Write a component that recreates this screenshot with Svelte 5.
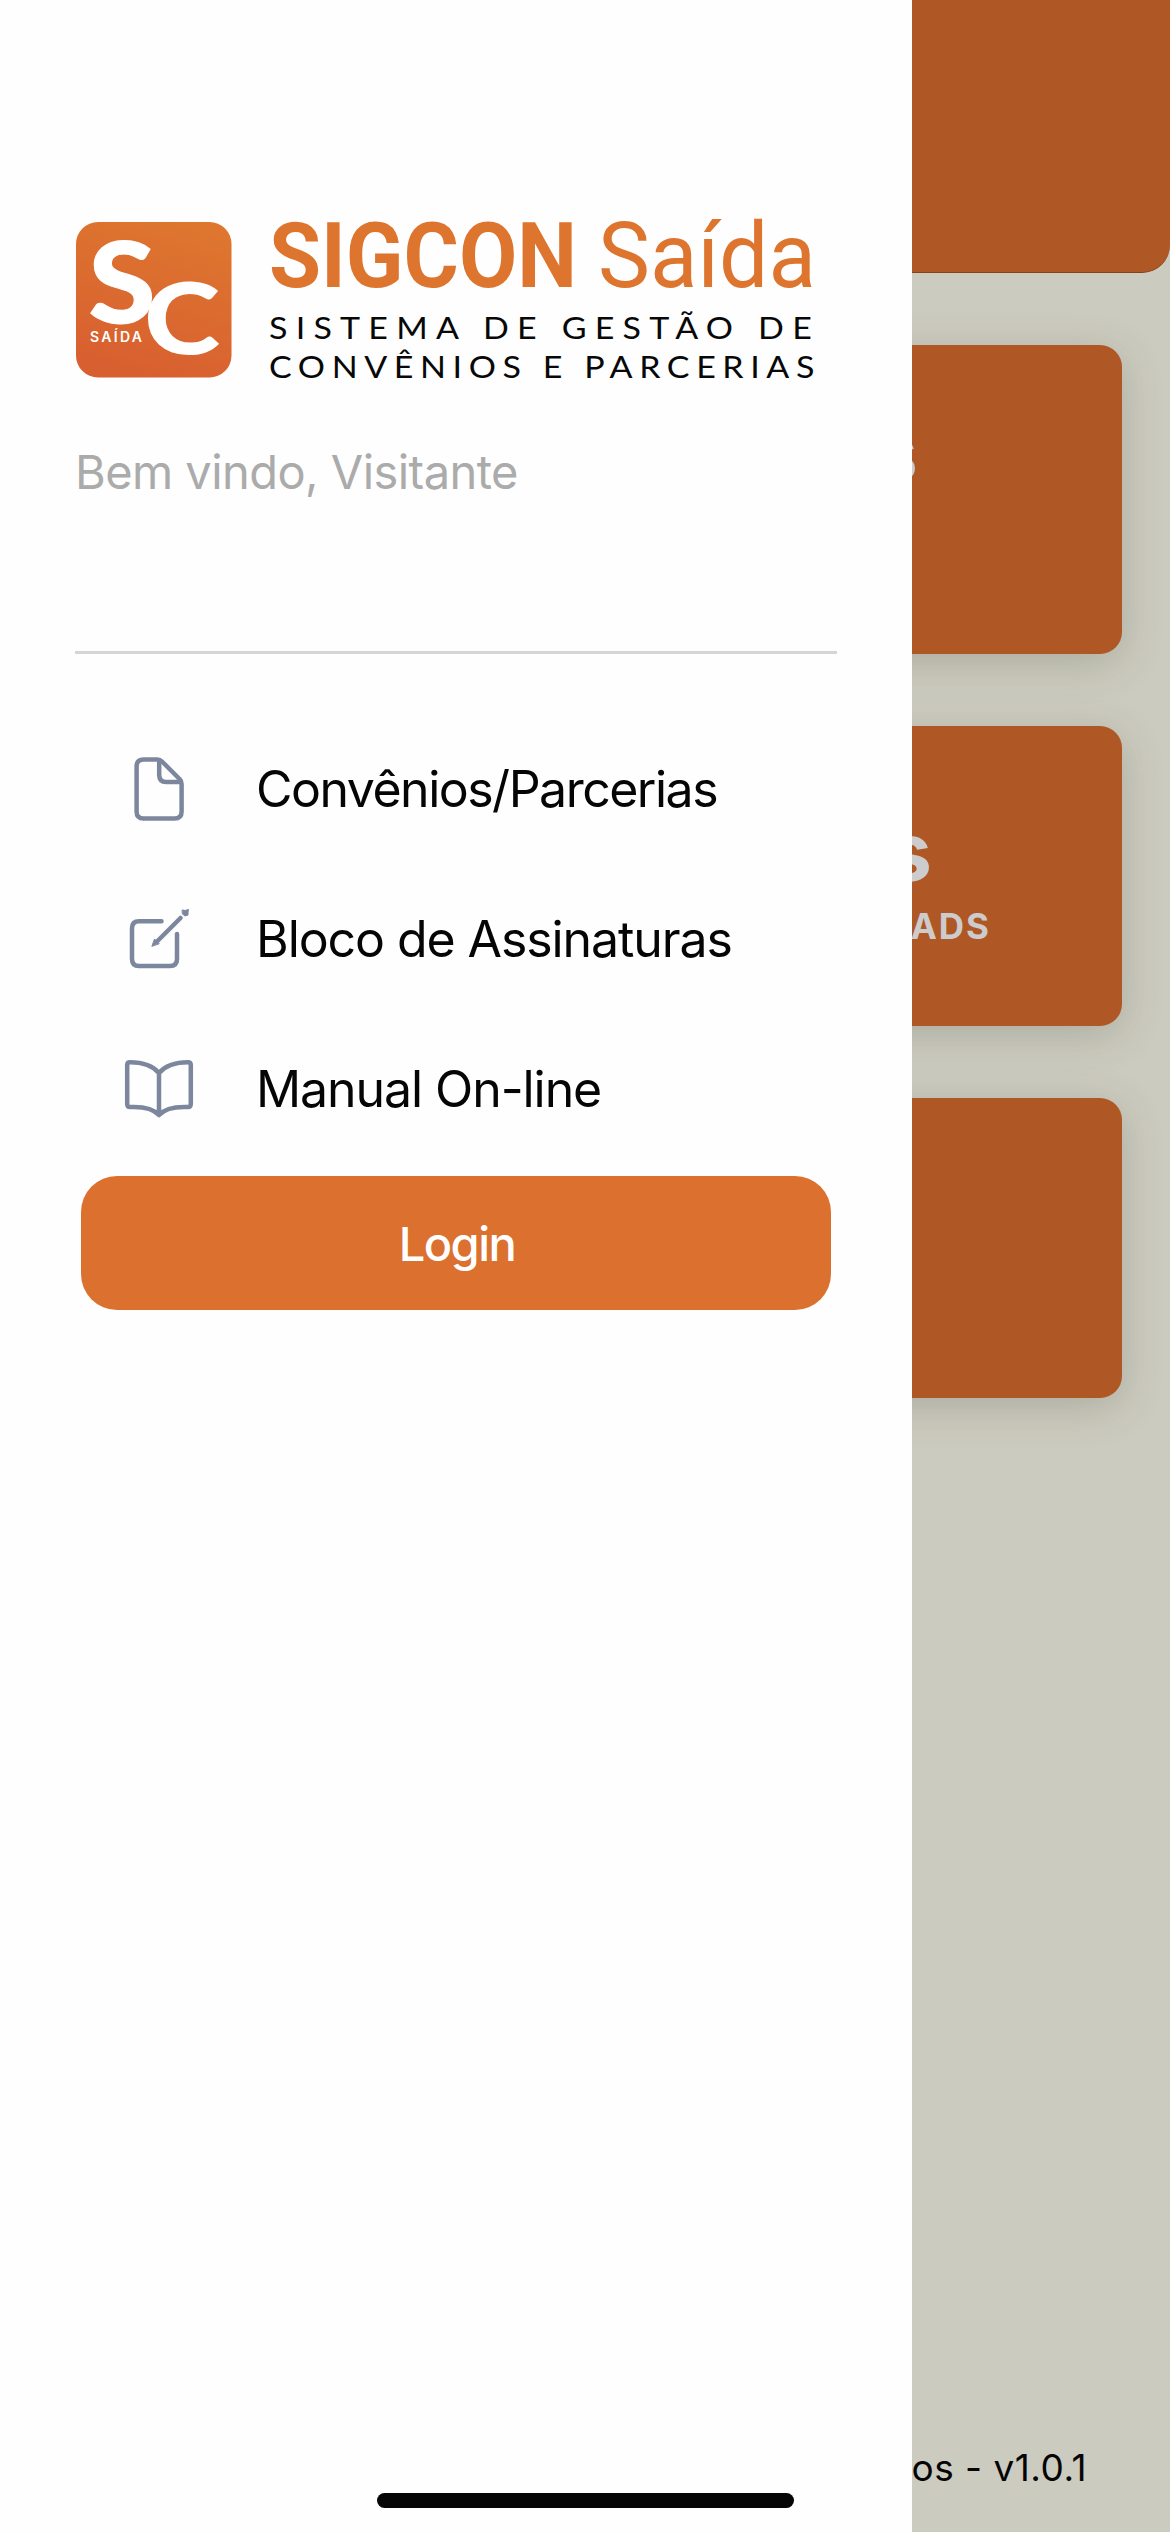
<script>
  const items = [
    { label: 'Convênios/Parcerias', icon: 'file', cls: 'tight' },
    { label: 'Bloco de Assinaturas', icon: 'edit', cls: 'normal' },
    { label: 'Manual On-line', icon: 'book', cls: 'normal' }
  ];
</script>

<div class="screen">
  <div class="page">
    <header></header>
    <main>
      <section class="card tall"><span class="value">s</span></section>
      <section class="card"><span class="value">s</span><span class="caption">ADS</span></section>
      <section class="card"></section>
    </main>
    <footer>os - v1.0.1</footer>
  </div>

  <aside>
    <svg class="logo" viewBox="0 -30 762 210" width="762" height="210" role="img" aria-label="SIGCON Saída">
      <defs>
        <linearGradient id="tile" x1="0.65" y1="0" x2="0.35" y2="1">
          <stop offset="0" stop-color="#de762f" />
          <stop offset="1" stop-color="#d85f30" />
        </linearGradient>
      </defs>
      <rect x="1" y="12" width="155.500" height="155.500" rx="22" fill="url(#tile)" />
      <text x="13.500" y="113" class="mono" textLength="67" lengthAdjust="spacingAndGlyphs">S</text>
      <text x="69" y="144" class="mono small" textLength="76" lengthAdjust="spacingAndGlyphs">C</text>
      <text x="15" y="131.500" class="mini" textLength="52">SAÍDA</text>
      <text x="194" y="77" class="brand bold" textLength="308" lengthAdjust="spacingAndGlyphs">SIGCON</text>
      <text x="523" y="77" class="brand" textLength="218" lengthAdjust="spacingAndGlyphs">Saída</text>
      <text x="194" y="128.500" class="sub first" textLength="551" lengthAdjust="spacingAndGlyphs">SISTEMA DE GESTÃO DE</text>
      <text x="194" y="167.700" class="sub" textLength="552" lengthAdjust="spacingAndGlyphs">CONVÊNIOS E PARCERIAS</text>
    </svg>

    <p class="greeting">Bem vindo, Visitante</p>
    <hr />

    <nav>
      {#each items as item}
        <div class="item">
          <svg class="icon" viewBox="0 0 72 72" width="72" height="72">
            {#if item.icon === 'file'}
              <path d="M21.500 6.500H35.500Q38 6.500 40 8.500L57.500 26Q59.600 28 59.600 31V58.500Q59.600 65.500 52.600 65.500H21.500Q14.600 65.500 14.600 58.500V13.500Q14.600 6.500 21.500 6.500Z" />
              <path d="M37.200 7.500V22Q37.200 29 44.200 29H58.500" />
            {:else if item.icon === 'edit'}
              <path d="M39.500 18.200H17Q10 18.200 10 25.200V56Q10 63 17 63H48Q55 63 55 56V31" />
              <path d="M35 38.500L58.500 15" />
              <path class="tip" d="M30 43L32.500 36L37 40.500Z" />
              <path class="tip" d="M60.500 7L63 7.500L66.500 6.500L66 9L66 12L63 13L60.500 11Z" />
            {:else}
              <path d="M37 20Q28 9.200 8 9.200Q5.200 9.200 5.200 12V51Q5.200 54 8 54Q29 53 37 62Q45 53 66 54Q68.800 54 68.800 51V12Q68.800 9.200 66 9.200Q46 9.200 37 20V61" />
            {/if}
          </svg>
          <span class={item.cls}>{item.label}</span>
        </div>
      {/each}
    </nav>
    <button>Login</button>
  </aside>
  <div class="home"></div>
</div>

<style>
  :global(body) { margin: 0; }
  .screen {
    position: relative;
    width: 1170px;
    height: 2532px;
    overflow: hidden;
    font-family: Inter, 'Liberation Sans', sans-serif;
  }
  .page {
    display: flex;
    flex-direction: column;
    height: 100%;
    background: #cccbbf;
  }
  header {
    box-sizing: border-box;
    height: 273px;
    background: #af5725;
    border-bottom: 1px solid #854319;
    border-radius: 0 0 28px 28px;
  }
  main {
    display: flex;
    flex-direction: column;
    gap: 72px;
    padding: 72px 48px 0;
  }
  .card {
    box-sizing: border-box;
    display: flex;
    flex-direction: column;
    align-items: flex-end;
    height: 300px;
    padding: 86px 190px 0 0;
    border-radius: 22px;
    background: #af5725;
    box-shadow: 0 9px 42px rgba(70, 75, 60, 0.24);
    color: #cccccc;
    font-weight: 700;
  }
  .card.tall { height: 309px; padding: 68px 204px 0 0; }
  .value { font-size: 82px; line-height: 80px; }
  .caption { margin: 13px -59px 0 0; font-size: 35px; line-height: 42px; letter-spacing: 2px; }
  footer {
    margin-top: auto;
    padding: 0 83px 40px 0;
    text-align: right;
    font-size: 37px;
    line-height: 48px;
    letter-spacing: 0.5px;
    color: #050505;
  }
  aside {
    box-sizing: border-box;
    position: absolute;
    top: 0;
    left: 0;
    width: 912px;
    height: 100%;
    padding: 180px 75px 0;
    background: #fefefe;
  }
  .logo { display: block; }
  .mono { font: 900 113px Lato, sans-serif; fill: #fff; stroke: #fff; stroke-width: 1px; }
  .mono.small { font-size: 100px; stroke-width: 0; }
  .mini { font: 600 14px Inter, sans-serif; fill: #fff; }
  .brand { font: 400 91px Roboto, sans-serif; fill: #dd752f; }
  .brand.bold { font-weight: 700; }
  .sub { font: 400 31px Lato, sans-serif; letter-spacing: 6px; fill: #080808; }
  .sub.first { letter-spacing: 7.500px; }
  .greeting {
    height: 207px;
    margin: 54px 0 0;
    font-size: 47px;
    line-height: 56px;
    letter-spacing: -0.550px;
    color: #ababab;
  }
  hr { height: 3px; margin: 0; border: 0; background: #d5d5d6; }
  nav { display: flex; flex-direction: column; padding: 60px 0 0 47px; }
  .item { display: flex; align-items: center; gap: 62px; height: 150px; font-size: 50px; color: #050505; }
  .item span { white-space: nowrap; }
  .normal { letter-spacing: -1.080px; }
  .tight { letter-spacing: -1.500px; }
  .icon { flex: none; fill: none; stroke: #7c879e; stroke-width: 4.500; stroke-linecap: round; stroke-linejoin: round; }
  .tip { fill: #7c879e; stroke-width: 1; }
  button {
    display: block;
    width: 750px;
    height: 134px;
    margin: 12px 0 0 6px;
    padding: 0 0 0 2px;
    border: 0;
    border-radius: 36px;
    background: #db702f;
    color: #fff;
    font: 500 47px Inter, sans-serif;
    letter-spacing: -1.500px;
  }
  .home {
    position: absolute;
    left: 377px;
    bottom: 24px;
    width: 417px;
    height: 15px;
    border-radius: 8px;
    background: #060606;
  }
</style>
